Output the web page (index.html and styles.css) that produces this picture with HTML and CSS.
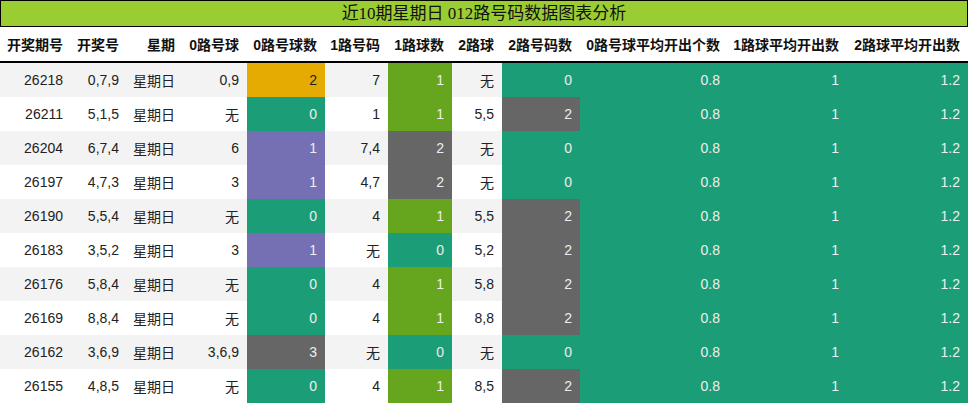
FILE: index.html
```html
<!DOCTYPE html>
<html lang="zh-CN">
<head>
<meta charset="utf-8">
<title>近10期星期日 012路号码数据图表分析</title>
<link rel="stylesheet" href="styles.css">
</head>
<body>
<div class="title">近10期星期日 012路号码数据图表分析</div>
<table class="grid">
<colgroup>
<col class="w71"><col class="w56"><col class="w56"><col class="w64"><col class="w78"><col class="w63"><col class="w64"><col class="w50"><col class="w78"><col class="w148"><col class="w119"><col class="w120">
</colgroup>
<thead>
<tr><th>开奖期号</th><th>开奖号</th><th>星期</th><th>0路号球</th><th>0路号球数</th><th>1路号码</th><th>1路球数</th><th>2路球</th><th>2路号码数</th><th>0路号球平均开出个数</th><th>1路球平均开出数</th><th>2路球平均开出数</th></tr>
</thead>
<tbody>
<tr><td>26218</td><td>0,7,9</td><td>星期日</td><td>0,9</td><td class="c-mus">2</td><td>7</td><td class="c-grn">1</td><td>无</td><td class="c-teal">0</td><td class="c-teal">0.8</td><td class="c-teal">1</td><td class="c-teal">1.2</td></tr>
<tr><td>26211</td><td>5,1,5</td><td>星期日</td><td>无</td><td class="c-teal">0</td><td>1</td><td class="c-grn">1</td><td>5,5</td><td class="c-gray">2</td><td class="c-teal">0.8</td><td class="c-teal">1</td><td class="c-teal">1.2</td></tr>
<tr><td>26204</td><td>6,7,4</td><td>星期日</td><td>6</td><td class="c-pur">1</td><td>7,4</td><td class="c-gray">2</td><td>无</td><td class="c-teal">0</td><td class="c-teal">0.8</td><td class="c-teal">1</td><td class="c-teal">1.2</td></tr>
<tr><td>26197</td><td>4,7,3</td><td>星期日</td><td>3</td><td class="c-pur">1</td><td>4,7</td><td class="c-gray">2</td><td>无</td><td class="c-teal">0</td><td class="c-teal">0.8</td><td class="c-teal">1</td><td class="c-teal">1.2</td></tr>
<tr><td>26190</td><td>5,5,4</td><td>星期日</td><td>无</td><td class="c-teal">0</td><td>4</td><td class="c-grn">1</td><td>5,5</td><td class="c-gray">2</td><td class="c-teal">0.8</td><td class="c-teal">1</td><td class="c-teal">1.2</td></tr>
<tr><td>26183</td><td>3,5,2</td><td>星期日</td><td>3</td><td class="c-pur">1</td><td>无</td><td class="c-teal">0</td><td>5,2</td><td class="c-gray">2</td><td class="c-teal">0.8</td><td class="c-teal">1</td><td class="c-teal">1.2</td></tr>
<tr><td>26176</td><td>5,8,4</td><td>星期日</td><td>无</td><td class="c-teal">0</td><td>4</td><td class="c-grn">1</td><td>5,8</td><td class="c-gray">2</td><td class="c-teal">0.8</td><td class="c-teal">1</td><td class="c-teal">1.2</td></tr>
<tr><td>26169</td><td>8,8,4</td><td>星期日</td><td>无</td><td class="c-teal">0</td><td>4</td><td class="c-grn">1</td><td>8,8</td><td class="c-gray">2</td><td class="c-teal">0.8</td><td class="c-teal">1</td><td class="c-teal">1.2</td></tr>
<tr><td>26162</td><td>3,6,9</td><td>星期日</td><td>3,6,9</td><td class="c-gray">3</td><td>无</td><td class="c-teal">0</td><td>无</td><td class="c-teal">0</td><td class="c-teal">0.8</td><td class="c-teal">1</td><td class="c-teal">1.2</td></tr>
<tr><td>26155</td><td>4,8,5</td><td>星期日</td><td>无</td><td class="c-teal">0</td><td>4</td><td class="c-grn">1</td><td>8,5</td><td class="c-gray">2</td><td class="c-teal">0.8</td><td class="c-teal">1</td><td class="c-teal">1.2</td></tr>
</tbody>
</table>
</body>
</html>
```

FILE: styles.css
```css
html, body {
  margin: 0;
  padding: 0;
  background: #fff;
}
body {
  width: 968px;
  font-family: "Liberation Sans", "Noto Sans CJK SC", sans-serif;
  color: #222;
}
.title {
  box-sizing: border-box;
  height: 27px;
  border: 1px solid #000;
  background: #9acd32;
  text-align: center;
  font-family: "Liberation Serif", "Noto Sans CJK SC", serif;
  font-size: 17px;
  line-height: 25px;
  color: #111;
}
.grid {
  width: 968px;
  table-layout: fixed;
  border-collapse: collapse;
  border-spacing: 0;
}
.w71 { width: 71px; }
.w56 { width: 56px; }
.w64 { width: 64px; }
.w78 { width: 78px; }
.w63 { width: 63px; }
.w50 { width: 50px; }
.w148 { width: 148px; }
.w119 { width: 119px; }
.w120 { width: 121px; }
.grid th,
.grid td {
  padding: 0 8px 0 0;
  text-align: right;
  white-space: nowrap;
  overflow: visible;
  font-size: 14px;
}
.grid th {
  height: 34px;
  font-weight: bold;
  color: #111;
  border-bottom: 2px solid #000;
}
.grid td {
  height: 34px;
  color: #222;
}
.grid tbody tr:nth-child(odd) td {
  background: #f3f3f3;
}
.grid tbody tr:nth-child(even) td {
  background: #fff;
}
.grid tbody tr td.c-teal { background: #1b9e77; color: #eee; }
.grid tbody tr td.c-pur { background: #7570b3; color: #eee; }
.grid tbody tr td.c-grn { background: #66a61e; color: #eee; }
.grid tbody tr td.c-gray { background: #666666; color: #eee; }
.grid tbody tr td.c-mus { background: #e6ab02; color: #222; }
```
